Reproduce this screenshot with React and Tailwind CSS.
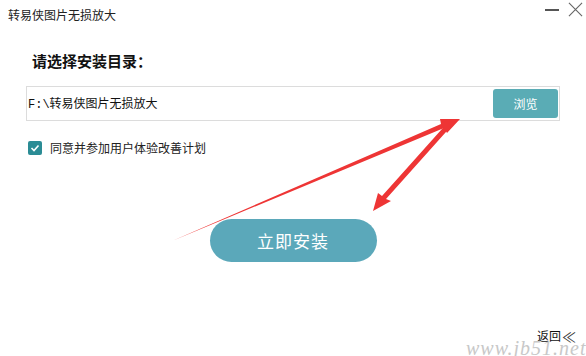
export default function App() {
  return (
    <div className="relative w-[586px] h-[356px] bg-white overflow-hidden flex flex-col" style={{ fontFamily: '"Noto Sans CJK SC", "Noto Sans", sans-serif' }}>
      <div className="h-[33px] flex items-start justify-between pl-[8px] pr-[3px]">
        <span className="mt-[9px] text-[12px] text-[#222] leading-none">转易侠图片无损放大</span>
        <div className="flex items-center gap-[9px] mt-[2px]">
          <div className="w-[14px] h-[2px] bg-[#555]" />
          <svg width="15" height="15" viewBox="0 0 16 16">
            <path d="M1 1 L15 15 M15 1 L1 15" stroke="#666" strokeWidth="1.2" />
          </svg>
        </div>
      </div>
      <div className="px-[26px] flex flex-col">
        <div className="mt-[18px] pl-[6px] text-[15px] font-bold text-[#111] leading-[20px]">请选择安装目录：</div>
        <div className="mt-[15px] h-[35px] border border-[#dcdcdc] flex items-center justify-between pl-[1px] pr-[1px]">
          <span className="text-[12px] text-[#111]"><span style={{ fontFamily: '"Liberation Mono", monospace' }}>F:\</span>转易侠图片无损放大</span>
          <div className="w-[65px] h-[29px] rounded-[3px] bg-[#5aacb5] flex items-center justify-center text-[12px] text-white">浏览</div>
        </div>
        <div className="mt-[18px] flex items-center gap-[8px] pl-[2px]">
          <div className="w-[14px] h-[14px] rounded-[2px] bg-[#2b8c95] flex items-center justify-center">
            <svg width="10" height="10" viewBox="0 0 10 10">
              <path d="M1.5 5 L4 7.5 L8.5 2.5" stroke="white" strokeWidth="1.6" fill="none" />
            </svg>
          </div>
          <span className="text-[12px] text-[#222]">同意并参加用户体验改善计划</span>
        </div>
        <div className="mt-[62px] flex justify-center">
          <div className="w-[167px] h-[43px] rounded-full bg-[#5ba8ba] flex items-center justify-center text-[17px] text-white tracking-[1px]">立即安装</div>
        </div>
      </div>
      <div className="absolute left-[537px] top-[329px] text-[12px] text-[#111] leading-none flex items-center">返回<span className="text-[14px] ml-[1px] text-[#333]">≪</span></div>
      <div className="absolute left-[466px] top-[338px] text-[20px] italic text-[#c8c8c8] leading-none tracking-[1px]" style={{ fontFamily: '"Liberation Serif", serif' }}>www.jb51.net</div>
      <svg className="absolute left-0 top-0 pointer-events-none" width="586" height="356" viewBox="0 0 586 356">
        <polygon points="172,241 441,124 440,119 460,119 447,133 444,128" fill="#ee3535" />
        <polygon points="454,123 386,199 391,201 373,211 378,193 382,196 450,120" fill="#ee3535" />
      </svg>
    </div>
  );
}
